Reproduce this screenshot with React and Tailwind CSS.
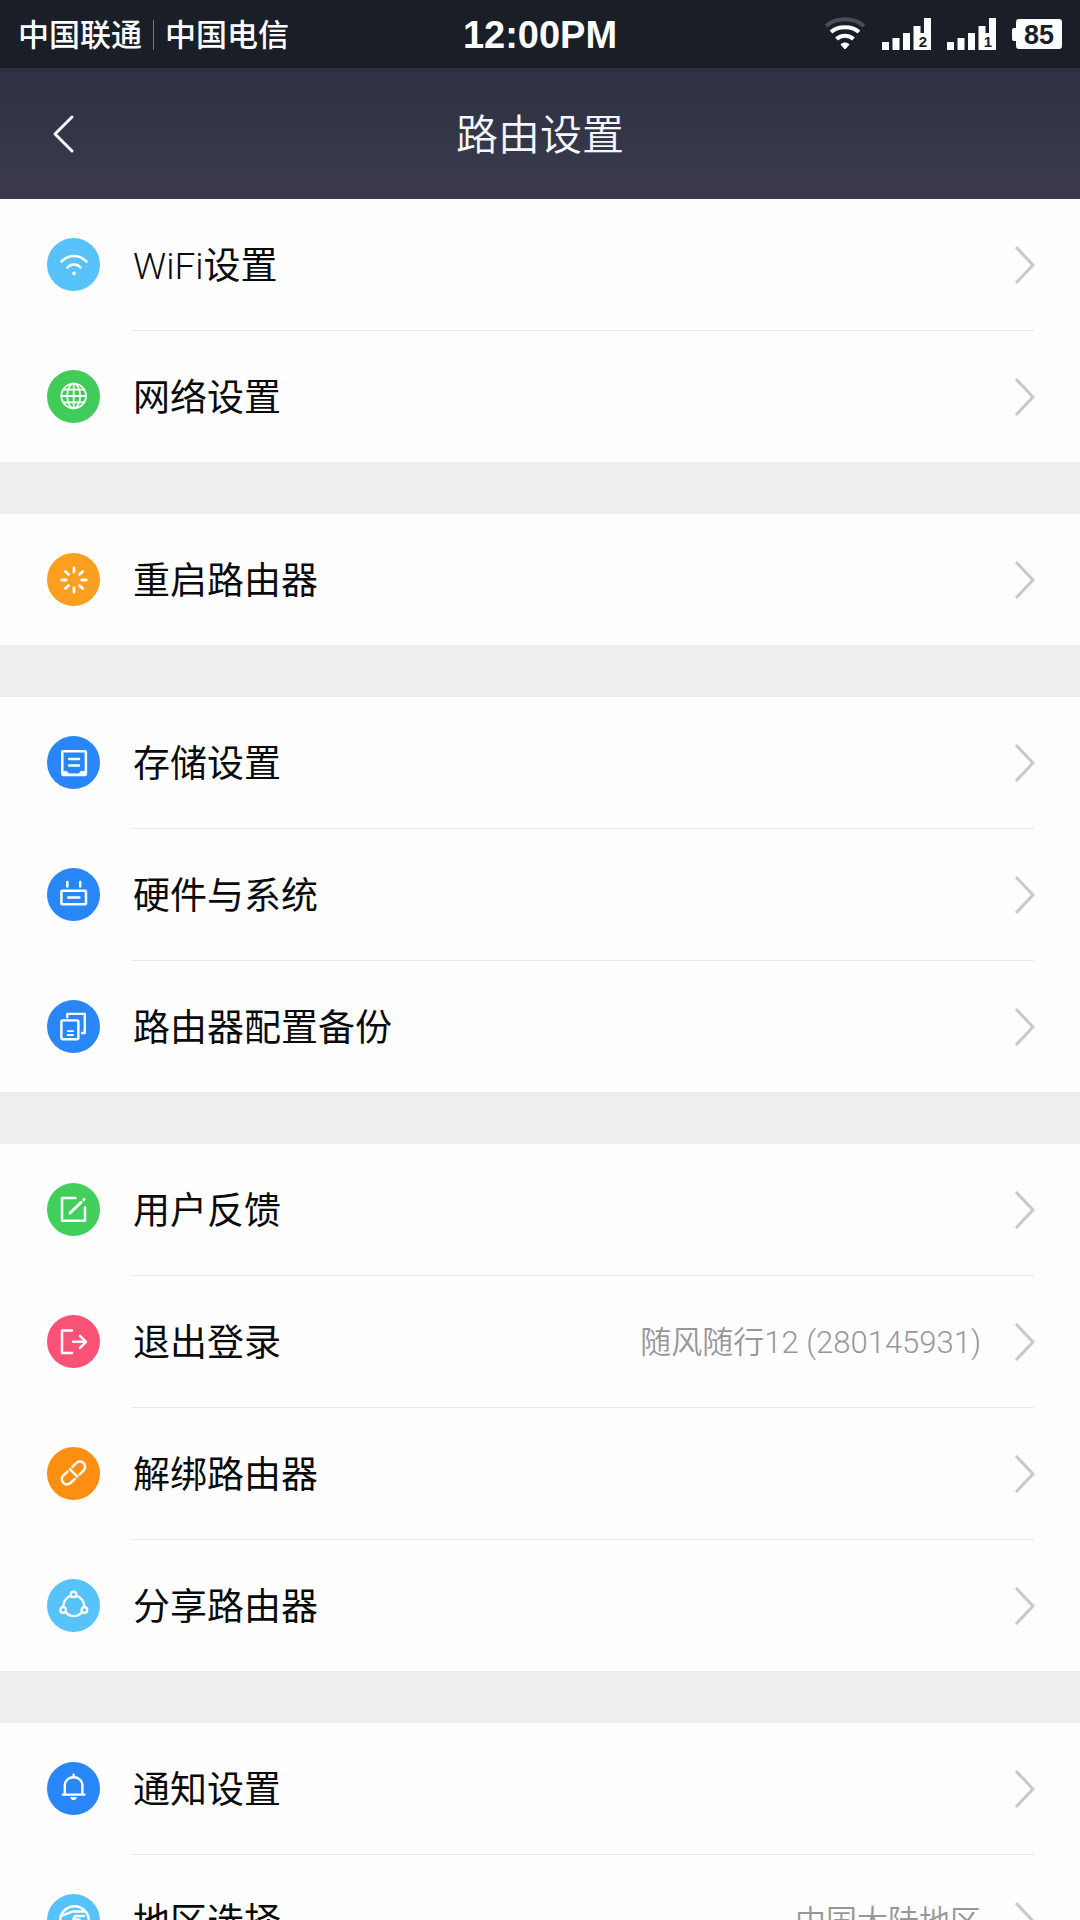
import React from 'react';

const line = { fill: 'none', stroke: 'currentColor', strokeWidth: 2.5, strokeLinecap: 'round', strokeLinejoin: 'round' };

const icons = {
  wifi: (
    <g {...line}>
      <path d="M14.5 23.5 C22 16 32 16 39.5 23.5" />
      <path d="M20.5 29.5 C24 25.5 30 25.5 33.5 29.5" />
      <circle cx="27" cy="35.4" r="1" fill="currentColor" strokeWidth="1.6" />
    </g>
  ),
  globe: (
    <g {...line} strokeWidth="1.8">
      <circle cx="26.7" cy="26" r="12.3" />
      <ellipse cx="26.7" cy="26" rx="6.4" ry="12.3" />
      <path d="M26.7 13.7 V38.3 M14.4 26 H39 M16.5 19.6 H36.9 M16.5 32.4 H36.9" />
    </g>
  ),
  restart: (
    <g {...line} strokeWidth="2.8">
      <path d="M27 14.8 V19.2 M27 34.8 V39.2 M14.8 27 H19.2 M34.8 27 H39.2 M18.4 18.4 L21.5 21.5 M32.5 32.5 L35.6 35.6 M18.4 35.6 L21.5 32.5 M32.5 21.5 L35.6 18.4" />
    </g>
  ),
  storage: (
    <g {...line}>
      <rect x="15.3" y="15.3" width="23.6" height="23.6" rx="0.8" />
      <path d="M22.2 23 H32 M22.2 29.6 H32" />
      <path d="M15.3 35.4 H20 L21.5 38 H32 L33.5 35.4 H39 V39 H15.3 Z" fill="currentColor" strokeWidth="0.8" />
    </g>
  ),
  router: (
    <g {...line}>
      <rect x="14.4" y="22.8" width="24.6" height="13.4" rx="0.8" />
      <path d="M21.2 29.5 H32.4 M20.3 14 V18.6 M33.2 14 V18.6" />
    </g>
  ),
  backup: (
    <g {...line} strokeWidth="2.4">
      <rect x="14.4" y="20.4" width="17" height="18.8" rx="1.2" />
      <path d="M20.3 17.2 V13.9 H37.8 V33 H35" />
      <path d="M20.6 31.2 H26 M20.6 35 H26" strokeWidth="1.8" />
    </g>
  ),
  feedback: (
    <g {...line}>
      <path d="M28.5 15 H15 V37.8 H38 V24.5" />
      <path d="M23 30 L34 19.4" strokeWidth="3" />
      <path d="M36.8 16.8 L37.2 16.4" strokeWidth="3" />
    </g>
  ),
  logout: (
    <g {...line}>
      <path d="M25 15.6 H15 V38 H25" />
      <path d="M26 26.8 H39 M33 20.8 L39 26.8 L33 32.8" />
    </g>
  ),
  link: (
    <g {...line} strokeLinecap="butt" transform="rotate(-44 26.5 26)">
      <path d="M24.2 20.8 H17.6 A5.2 5.2 0 0 0 17.6 31.2 H24.2" />
      <path d="M28.8 20.8 H35.4 A5.2 5.2 0 0 1 35.4 31.2 H28.8" />
      <path d="M26.6 19.8 V32.2" strokeWidth="2.4" />
    </g>
  ),
  share: (
    <g {...line} strokeWidth="2.3">
      <circle cx="26.5" cy="15.4" r="2.8" />
      <circle cx="16.2" cy="31" r="2.8" />
      <circle cx="37.4" cy="31" r="2.8" />
      <path d="M23.4 16.8 C18.8 19 16.4 23 16.2 28 M29.6 16.8 C34.6 19 37.2 23 37.4 28 M18.8 33.2 C23 38.4 30.6 38.4 34.8 33.2" />
    </g>
  ),
  bell: (
    <g {...line} strokeWidth="2.4">
      <path d="M17.8 32 V23.6 C17.8 12.4 35.4 12.4 35.4 23.6 V32" />
      <path d="M15.8 32.6 H37.4 M26.6 12.8 V14.4" />
      <path d="M23.8 36 C25 38.4 28.2 38.4 29.4 36 Z" fill="currentColor" strokeWidth="1" />
    </g>
  ),
  region: (
    <g {...line}>
      <circle cx="27.5" cy="26.5" r="14.3" />
      <path d="M14 22 C19 20.6 22 18.6 26 17.4 H38.6 M37 22 H28 L26.4 25 C31 25 34 25.6 34 28 C34 30.4 31 31.4 28 33" />
    </g>
  ),
};

const groups = [
  [
    { latin: 'WiFi', label: '设置', icon: 'wifi', color: 'bg-[#57c3fa]' },
    { label: '网络设置', icon: 'globe', color: 'bg-[#41cb5a]' },
  ],
  [{ label: '重启路由器', icon: 'restart', color: 'bg-[#fb9f20]' }],
  [
    { label: '存储设置', icon: 'storage', color: 'bg-[#2886f6]' },
    { label: '硬件与系统', icon: 'router', color: 'bg-[#2886f6]' },
    { label: '路由器配置备份', icon: 'backup', color: 'bg-[#2886f6]' },
  ],
  [
    { label: '用户反馈', icon: 'feedback', color: 'bg-[#41d05c]' },
    { label: '退出登录', icon: 'logout', color: 'bg-[#fa5277]', value: '随风随行12 (280145931)' },
    { label: '解绑路由器', icon: 'link', color: 'bg-[#ff8f12]' },
    { label: '分享路由器', icon: 'share', color: 'bg-[#57c3fa]' },
  ],
  [
    { label: '通知设置', icon: 'bell', color: 'bg-[#2886f6]' },
    { label: '地区选择', icon: 'region', color: 'bg-[#57c3fa]', value: '中国大陆地区' },
  ],
];

function Signal({ sim }) {
  return (
    <svg width="49" height="33" viewBox="0 0 49 33" className="shrink-0" fill="#fcfdff">
      <path d="M0 24 H7 V32 H0 Z M10.5 20 H17.5 V32 H10.5 Z M21 15 H28 V32 H21 Z M31.5 8 H38.5 V15 H42 V0 H49 V32 H31.5 Z" />
      <text x="41" y="29" textAnchor="middle" fontSize="15" className="fill-[#1a1f27] font-['Liberation_Sans',sans-serif] font-bold">{sim}</text>
    </svg>
  );
}

function StatusBar() {
  return (
    <div className="grid h-[68px] shrink-0 grid-cols-3 items-center bg-[#1a1f27] px-[18px] text-[#fcfdff]">
      <div className="flex items-center gap-[11px] pt-[2px] text-[31px] leading-none font-medium">
        <span>中国联通</span>
        <span className="h-[30px] w-px bg-[#74787e]" />
        <span>中国电信</span>
      </div>
      <div className="pt-[2px] text-center font-['Liberation_Sans',sans-serif] text-[38px] leading-none font-bold">12:00PM</div>
      <div className="flex items-center justify-end gap-4">
        <svg width="42" height="34" viewBox="0 0 42 34" fill="none" stroke="#fcfdff" strokeWidth="4">
          <path d="M2 9 C12 0 30 0 40 9" stroke="#4a4e56" />
          <path d="M7 15 C14 8.5 28 8.5 35 15" />
          <path d="M12.5 22 C17 17.5 25 17.5 29.5 22" />
          <path d="M17 27.5 C19 25.5 23 25.5 25 27.5 L21 32 Z" fill="#fcfdff" strokeWidth="1" />
        </svg>
        <Signal sim="2" />
        <Signal sim="1" />
        <div className="flex items-center">
          <span className="h-[13px] w-[4px] rounded-l-xs bg-[#fcfdff]" />
          <span className="flex h-[30px] w-[46px] items-center justify-center rounded-[3px] bg-[#fcfdff] pt-[2px] font-['Liberation_Sans',sans-serif] text-[27px] leading-none font-bold text-[#1a1f27]">
            85
          </span>
        </div>
      </div>
    </div>
  );
}

function Header() {
  return (
    <header className="grid h-[131px] shrink-0 grid-cols-[1fr_auto_1fr] items-center bg-linear-to-b from-[#2d3141] to-[#3b3b4d] px-[45px] text-[#f5f7ff]">
      <button type="button" aria-label="返回" className="w-9">
        <svg width="36" height="40" viewBox="0 0 36 40" fill="none" stroke="currentColor" strokeWidth="3" strokeLinecap="round" strokeLinejoin="round">
          <path d="M27 3 L10 20 L27 37" />
        </svg>
      </button>
      <h1 className="pt-1 text-[42px] leading-none font-[350]">路由设置</h1>
    </header>
  );
}

function Row({ item }) {
  return (
    <button type="button" className="flex h-[131px] w-full items-center pr-[45px] pl-[47px] text-left">
      <span className={`mr-[33px] flex size-[53px] shrink-0 items-center justify-center rounded-full text-white ${item.color}`}>
        <svg width="53" height="53" viewBox="0 0 53 53">{icons[item.icon]}</svg>
      </span>
      <span className="flex-1 pt-1 text-[37px] leading-none font-normal text-[#0b0b0d]">
        {item.latin && <span className="font-[350]">{item.latin}</span>}
        {item.label}
      </span>
      {item.value && <span className="mr-[34px] pt-[2px] text-[31px] leading-none text-[#98969a]">{item.value}</span>}
      <svg width="20" height="38" viewBox="0 0 20 38" fill="none" stroke="#c9c7cb" strokeWidth="3" className="shrink-0">
        <path d="M1 1 L18 19 L1 37" />
      </svg>
    </button>
  );
}

export default function App() {
  return (
    <div className="flex h-screen flex-col bg-white font-['Roboto','Noto_Sans_CJK_SC',sans-serif] font-[350]">
      <StatusBar />
      <Header />
      <main className="flex flex-1 flex-col gap-[52px] overflow-y-auto bg-[#efedef] [scrollbar-width:none]">
        {groups.map((group) => (
          <ul key={group[0].icon} className="shrink-0 bg-[#fefefe]">
            {group.map((item, i) => (
              <li key={item.icon}>
                {i > 0 && <div className="mr-[46px] ml-[132px] h-px bg-[#e9e7ea]" />}
                <Row item={item} />
              </li>
            ))}
          </ul>
        ))}
      </main>
    </div>
  );
}
